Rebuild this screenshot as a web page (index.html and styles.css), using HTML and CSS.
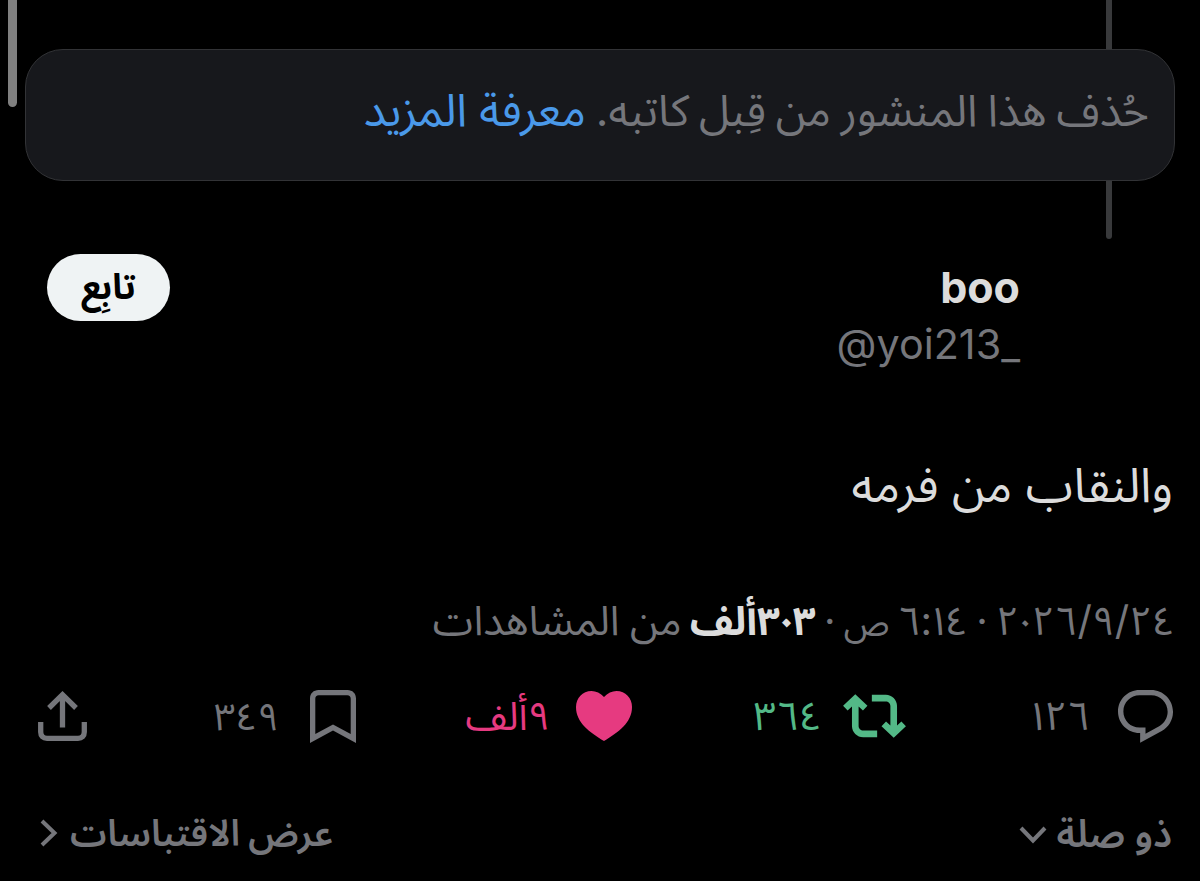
FILE: index.html
```
<!DOCTYPE html>
<html lang="ar" dir="rtl">
<head>
  <meta charset="utf-8">
  <title>boo</title>
  <meta name="viewport" content="width=device-width, initial-scale=1">
  <link rel="stylesheet" href="styles.css">
</head>
<body>
  <div class="scrollbar"></div>
  <div class="thread-line"></div>
  <div class="notice"><span class="notice-text">حُذف هذا المنشور من قِبل كاتبه.</span> <a class="notice-link">معرفة المزيد</a></div>
  <div class="author">
    <div class="author-names" dir="ltr">
      <div class="author-name">boo</div>
      <div class="author-handle">@yoi213_</div>
    </div>
    <button class="follow">تابِع</button>
  </div>
  <p class="post-text">والنقاب من فرمه</p>
  <div class="meta">٢٤&rlm;/٩&rlm;/٢<span class="zero">٠</span>٢٦ · ٦:<span class="one">١</span>٤ <span class="period">ص</span> · <b class="views">٣<span class="zero">٠</span>٣ألف</b> <span class="views-label">من المشاهدات</span></div>
  <div class="actions">
    <div class="action">
      <svg width="55" height="53" viewBox="1.75 2 20.5 19.75"><path d="M1.751 10c0-4.42 3.584-8 8.005-8h4.366c4.49 0 8.129 3.64 8.129 8.13 0 2.96-1.607 5.68-4.196 7.11l-8.054 4.46v-3.69h-.067c-4.49.1-8.183-3.51-8.183-8.01zm8.005-6c-3.317 0-6.005 2.69-6.005 6 0 3.37 2.77 6.08 6.138 6.01l.351-.01h1.761v2.3l5.087-2.81c1.951-1.08 3.163-3.13 3.163-5.36 0-3.39-2.744-6.13-6.129-6.13H9.756z"/></svg>
      <span class="count"><span class="one">١</span>٢٦</span>
    </div>
    <div class="action reposted">
      <svg width="63" height="44" viewBox="0.15 3.7 23.7 16.6"><path d="M4.75 3.79l4.603 4.3-1.706 1.82L6 8.38v7.37c0 .97.784 1.75 1.75 1.75H13V20H7.75c-2.347 0-4.25-1.9-4.25-4.25V8.38L1.853 9.91.147 8.09l4.603-4.3zm11.5 2.71H11V4h5.25c2.347 0 4.25 1.9 4.25 4.25v7.37l1.647-1.53 1.706 1.82-4.603 4.3-4.603-4.3 1.706-1.82L18 15.62V8.25c0-.97-.784-1.75-1.75-1.75z"/></svg>
      <span class="count">٣٦٤</span>
    </div>
    <div class="action liked">
      <svg width="56" height="50" viewBox="0 0 56 50"><path d="M28 6C24.500 2 20 0 15.500 0C6.500 0 0 7 0 16C0 32 14 41.500 28 50C42 41.500 56 32 56 16C56 7 49.500 0 40.500 0C36 0 31.500 2 28 6z"/></svg>
      <span class="count count-like">٩ألف</span>
    </div>
    <div class="action saved">
      <svg width="46" height="53" viewBox="0 0 46 53"><path d="M8.500 0H37.500C42.500 0 46 3.500 46 8.500V53L23 40.500L0 53V8.500C0 3.500 3.500 0 8.500 0zM8.700 5.300C6.500 5.300 5.300 6.500 5.300 8.700V44L23 34.500L40.700 44V8.700C40.700 6.500 39.500 5.300 37.300 5.300z"/></svg>
      <span class="count count-save">٣٤٩</span>
    </div>
    <div class="action">
      <svg class="share" width="49" height="50" viewBox="0 0 49 50"><path d="M24.500 3.500V36.500M11 17L24.500 3.700L38 17M2.700 31V41C2.700 45 5 47.300 9 47.300H40C44 47.300 46.300 45 46.300 41V31"/></svg>
    </div>
  </div>
  <div class="footer">
    <div class="sort">ذو صلة <svg class="chevron" width="28" height="18" viewBox="0 0 28 18"><path d="M2 2L14 14.500L26 2"/></svg></div>
    <div class="quotes">عرض الاقتباسات <svg class="chevron" width="18" height="28" viewBox="0 0 18 28"><path d="M2 2L14.500 14L2 26"/></svg></div>
  </div>
</body>
</html>
```

FILE: styles.css
```
* {
  box-sizing: border-box;
  margin: 0;
  padding: 0;
}
body {
  position: relative;
  height: 881px;
  overflow: hidden;
  background: #000;
  color: #dcdcdc;
  font-family: Inter, "Noto Sans Arabic", "Noto Sans", sans-serif;
  white-space: nowrap;
}
svg {
  display: block;
  flex: none;
  fill: currentColor;
}
.scrollbar {
  position: absolute;
  left: 8px;
  top: -10px;
  width: 9px;
  height: 117px;
  border-radius: 5px;
  background: #808080;
}
.thread-line {
  position: absolute;
  left: 1106px;
  top: -4px;
  width: 6px;
  height: 243px;
  border-radius: 3px;
  background: #38393b;
}
.notice {
  position: relative;
  height: 132px;
  margin: 49px 25px 0;
  padding: 28px 25px 0;
  border: 1px solid #323336;
  border-radius: 38px;
  background: #17181c;
  color: #75767b;
  font-size: 44px;
  line-height: 64px;
  word-spacing: -2.5px;
}
.notice-link {
  color: #4a99e9;
  font-size: 45.5px;
  font-weight: 450;
  word-spacing: 0;
}
.author {
  display: flex;
  justify-content: space-between;
  align-items: flex-start;
  padding: 73px 180px 0 47px;
}
.author-names {
  text-align: right;
}
.author-name {
  padding-top: 5px;
  font-size: 43px;
  font-weight: 700;
  line-height: 56px;
}
.author-handle {
  padding-top: 1px;
  color: #75767b;
  font-size: 41.3px;
  line-height: 56px;
}
.follow {
  width: 123px;
  height: 67px;
  border: 0;
  border-radius: 34px;
  background: #eff3f4;
  color: #000;
  font: 700 35px/60px "Noto Sans Arabic", "Noto Sans", sans-serif;
}
.post-text {
  padding: 79px 27px 0 0;
  font-size: 48px;
  line-height: 68px;
}
.meta {
  height: 131px;
  padding: 71px 25px 0 0;
  color: #75767b;
  font-size: 40px;
  line-height: 60px;
  word-spacing: -3px;
}
/* tighten the thin digits, letter-spacing has no effect on arabic */
.zero,
.one {
  margin: 0 -5px;
}
.period {
  font-size: 35px;
}
.views {
  color: #dcdcdc;
}
.views-label {
  font-size: 41px;
  word-spacing: -1px;
}
.actions {
  display: grid;
  grid-template-columns: 267px 274px 276px 1fr auto;
  align-items: center;
  height: 64px;
  margin-top: 34px;
  padding: 0 27px 0 38px;
  color: #75767b;
}
.action {
  display: flex;
  align-items: center;
  gap: 28px;
}
.reposted {
  gap: 21px;
  color: #53b987;
}
.liked {
  gap: 26px;
  color: #e63a80;
}
.saved {
  gap: 31px;
}
.count {
  font-size: 40px;
  line-height: 60px;
}
.count-like {
  font-size: 39px;
}
.count-save {
  font-size: 38px;
}
.share,
.chevron {
  fill: none;
  stroke: currentColor;
  stroke-width: 5.3;
}
.chevron {
  stroke-width: 4;
}
.footer {
  display: flex;
  justify-content: space-between;
  padding: 55px 28px 0 40px;
  color: #75767b;
  font-size: 38px;
  font-weight: 600;
  line-height: 60px;
}
.sort,
.quotes {
  display: flex;
  align-items: center;
  gap: 10px;
}
.sort .chevron {
  margin-top: 4px;
}
.quotes {
  gap: 12px;
  font-size: 36.7px;
  word-spacing: -1px;
}
```
